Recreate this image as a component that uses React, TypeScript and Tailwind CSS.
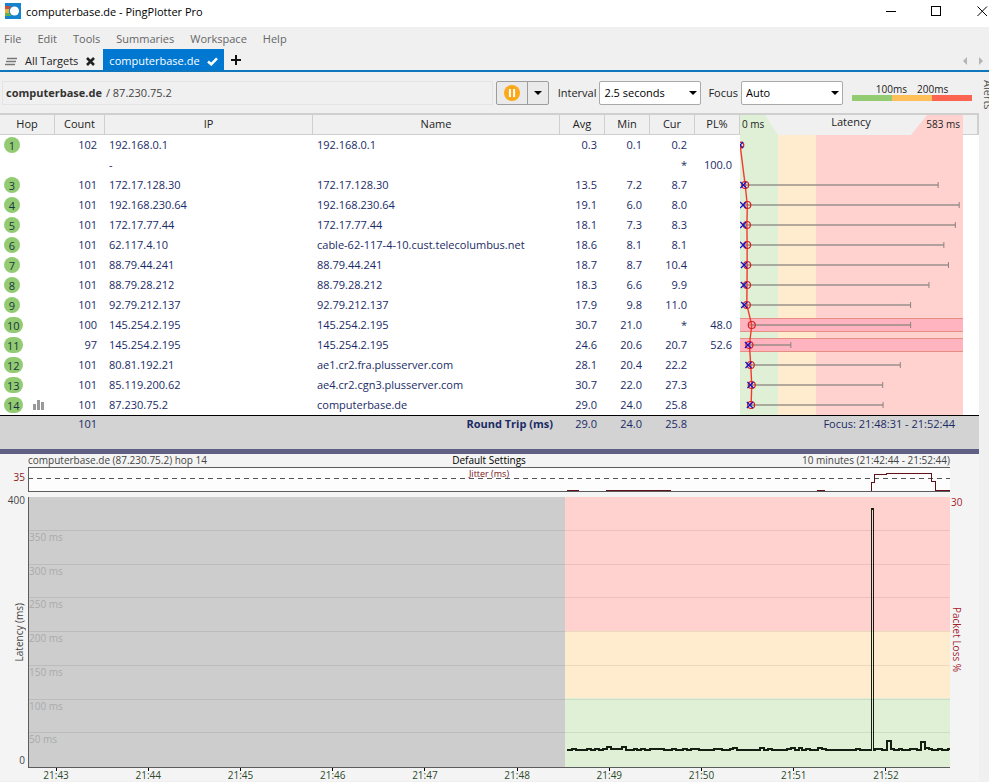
interface Hop {
    hop: number | null;
    count: string;
    ip: string;
    name: string;
    avg?: number;
    min?: number;
    cur?: number;
    max?: number;
    loss?: number;
}

const HOPS: Hop[] = [
    { hop: 1, count: '102', ip: '192.168.0.1', name: '192.168.0.1', avg: 0.3, min: 0.1, cur: 0.2 },
    { hop: null, count: '', ip: '-', name: '', loss: 100 },
    { hop: 3, count: '101', ip: '172.17.128.30', name: '172.17.128.30', avg: 13.5, min: 7.2, cur: 8.7, max: 518 },
    { hop: 4, count: '101', ip: '192.168.230.64', name: '192.168.230.64', avg: 19.1, min: 6.0, cur: 8.0, max: 573 },
    { hop: 5, count: '101', ip: '172.17.77.44', name: '172.17.77.44', avg: 18.1, min: 7.3, cur: 8.3, max: 563 },
    { hop: 6, count: '101', ip: '62.117.4.10', name: 'cable-62-117-4-10.cust.telecolumbus.net', avg: 18.6, min: 8.1, cur: 8.1, max: 533 },
    { hop: 7, count: '101', ip: '88.79.44.241', name: '88.79.44.241', avg: 18.7, min: 8.7, cur: 10.4, max: 545 },
    { hop: 8, count: '101', ip: '88.79.28.212', name: '88.79.28.212', avg: 18.3, min: 6.6, cur: 9.9, max: 494 },
    { hop: 9, count: '101', ip: '92.79.212.137', name: '92.79.212.137', avg: 17.9, min: 9.8, cur: 11.0, max: 446 },
    { hop: 10, count: '100', ip: '145.254.2.195', name: '145.254.2.195', avg: 30.7, min: 21.0, max: 446, loss: 48 },
    { hop: 11, count: '97', ip: '145.254.2.195', name: '145.254.2.195', avg: 24.6, min: 20.6, cur: 20.7, max: 133, loss: 52.6 },
    { hop: 12, count: '101', ip: '80.81.192.21', name: 'ae1.cr2.fra.plusserver.com', avg: 28.1, min: 20.4, cur: 22.2, max: 419 },
    { hop: 13, count: '101', ip: '85.119.200.62', name: 'ae4.cr2.cgn3.plusserver.com', avg: 30.7, min: 22.0, cur: 27.3, max: 373 },
    { hop: 14, count: '101', ip: '87.230.75.2', name: 'computerbase.de', avg: 29.0, min: 24.0, cur: 25.8, max: 374 }
];

const TIMES = ['21:43', '21:44', '21:45', '21:46', '21:47', '21:48', '21:49', '21:50', '21:51', '21:52'];
const GRID_LABELS = ['', '350 ms', '300 ms', '250 ms', '200 ms', '150 ms', '100 ms', '50 ms'];
const MENU = ['File', 'Edit', 'Tools', 'Summaries', 'Workspace', 'Help'];

// [start, end, height above the base line]
const STEPS: [number, number, number][] = [
    [543, 547, 1], [558, 562, 1], [566, 570, 1], [574, 578, 1], [578, 582, 3], [582, 593, 1], [593, 597, 3],
    [605, 608, 1], [612, 616, 1], [621, 635, 1], [643, 647, 1], [654, 658, 1], [662, 670, 1], [685, 693, 1],
    [701, 704, 1], [704, 708, 2], [731, 735, 2], [739, 743, 1], [758, 762, 1], [762, 766, 2], [770, 773, 2],
    [777, 781, 1], [789, 793, 2], [793, 797, 1], [827, 831, 1]
];
const STEPS_AFTER: [number, number, number][] = [
    [846, 853, 1], [858, 862, 9], [862, 865, 1], [870, 873, 1], [881, 888, 1], [892, 896, 8], [896, 900, 2],
    [900, 903, 1], [909, 913, 1], [919, 922, 1]
];

const BASE = 253;
const tracePath = (start: number, end: number, steps: [number, number, number][]) => {
    let d = `M${start} ${BASE}`;
    for (const [a, b, h] of steps) {
        d += `H${a}V${BASE - h}H${b}V${BASE}`;
    }
    return d + `H${end}`;
};

const SCALE = 223 / 583;
const px = (ms: number) => ms * SCALE;
const rowY = (i: number) => 32 + i * 20;
const fmt = (n?: number) => (n === undefined ? '' : n.toFixed(1));

function TitleBar() {
    return (
        <header className="flex h-[27px] items-start justify-between bg-white text-black">
            <div className="flex items-start gap-[5px] pl-[5px] pt-[3px]">
                <svg width="16" height="16" viewBox="0 0 16 16">
                    <rect width="16" height="16" fill="#1583cf" />
                    <rect y="3" width="6" height="3" fill="#c8503c" />
                    <rect y="6" width="6" height="4" fill="#e9b23c" />
                    <rect y="10" width="6" height="3" fill="#69b04b" />
                    <circle cx="9.5" cy="8" r="5.6" fill="#1583cf" />
                    <circle cx="9.5" cy="8" r="4.6" fill="#fff" />
                </svg>
                <h1 className="text-[11px] leading-[18px]">computerbase.de - PingPlotter Pro</h1>
            </div>
            <div className="flex">
                <button aria-label="Minimize" className="flex h-[22px] w-[45px] items-center justify-center">
                    <svg width="11" height="11" stroke="#000" shapeRendering="crispEdges"><path d="M0 5.5H10" /></svg>
                </button>
                <button aria-label="Maximize" className="flex h-[22px] w-[45px] items-center justify-center">
                    <svg width="11" height="11" fill="none" stroke="#000" shapeRendering="crispEdges">
                        <rect x="0.5" y="0.5" width="9" height="9" />
                    </svg>
                </button>
                <button aria-label="Close" className="flex h-[22px] w-[30px] items-center justify-end pr-px">
                    <svg width="11" height="11" stroke="#000"><path d="M0.5 0.5L10 10M10 0.5L0.5 10" /></svg>
                </button>
            </div>
        </header>
    );
}

function Tabs() {
    return (
        <div className="flex h-[23px] items-stretch border-b-2 border-[#0f77bd] text-[#222]">
            <button className="flex items-center gap-2 pl-[5px] pr-2 pt-[3px]">
                <svg width="12" height="9" stroke="#777" strokeWidth="1.4">
                    <path d="M2 1.5H12M1 4.5H11M0 7.5H10" />
                </svg>
                <span className="text-[11px]">All Targets</span>
            </button>
            <button aria-label="Close tab" className="mr-2 pt-[3px]">
                <svg width="9" height="9" stroke="#222" strokeWidth="2.6"><path d="M1 1L8 8M8 1L1 8" /></svg>
            </button>
            <button className="flex items-center gap-[7px] bg-[#0078d2] px-[6px] pt-[3px] text-white">
                <span className="text-[11px]">computerbase.de</span>
                <svg width="11" height="9" fill="none" stroke="#fff" strokeWidth="2.6"><path d="M1 4.5L4.2 7.3L10 1.3" /></svg>
            </button>
            <button aria-label="Add tab" className="px-[7px] pt-px">
                <svg width="11" height="11" stroke="#111" strokeWidth="2" shapeRendering="crispEdges"><path d="M0 5H10M5 0V10" /></svg>
            </button>
            <div className="ml-auto flex items-center gap-3 pr-[6px] pt-0.5">
                <svg width="4" height="8" fill="#b4b4b4"><path d="M4 0V8L0 4Z" /></svg>
                <svg width="4" height="8" fill="#b4b4b4"><path d="M0 0V8L4 4Z" /></svg>
            </div>
        </div>
    );
}

function Picker({ id, label, value }: { id: string; label: string; value: string }) {
    return (
        <div className="flex items-center gap-[3px]">
            <label htmlFor={id}>{label}</label>
            <div className="relative">
                <select
                    id={id}
                    defaultValue={value}
                    className="h-6 w-[102px] appearance-none rounded-[2px] border border-[#a9a9a9] bg-white pl-1 text-[11px] text-black"
                >
                    <option>{value}</option>
                </select>
                <svg className="pointer-events-none absolute right-1 top-[10px]" width="8" height="4"><path d="M0 0H8L4 4Z" /></svg>
            </div>
        </div>
    );
}

function Toolbar() {
    return (
        <div className="flex h-[41px] items-center pl-[2px] pr-[7px] text-[#222]">
            <div className="flex h-6 flex-1 items-center gap-1 border border-[#e4e4e4] pl-[3px] text-[#444]">
                <span className="font-bold text-[#333]">computerbase.de</span>
                <span>/ 87.230.75.2</span>
            </div>
            <div className="ml-[3px] flex h-6 rounded-[2px] border border-[#9d9d9d] bg-[#eaeaea]">
                <button aria-label="Pause" className="flex w-[31px] items-center justify-center border-r border-[#9d9d9d]">
                    <svg width="16" height="16">
                        <circle cx="8" cy="8" r="8" fill="#fba919" />
                        <path d="M5.9 4V12M10.1 4V12" stroke="#fff" strokeWidth="2" />
                    </svg>
                </button>
                <button aria-label="Pause options" className="flex w-5 items-center justify-center">
                    <svg width="8" height="4"><path d="M0 0H8L4 4Z" /></svg>
                </button>
            </div>
            <div className="ml-[9px] flex gap-[7px]">
                <Picker id="interval" label="Interval" value="2.5 seconds" />
                <Picker id="focus" label="Focus" value="Auto" />
            </div>
            <div className="ml-[9px] w-[120px] pb-0.5">
                <div className="flex justify-center gap-[10px] text-[10px] leading-3 text-[#222]">
                    <span>100ms</span>
                    <span>200ms</span>
                </div>
                <div className="flex h-[6px]">
                    <div className="flex-1 bg-[#93cb73]" />
                    <div className="flex-1 bg-[#ffbf58]" />
                    <div className="flex-1 bg-[#fa6450]" />
                </div>
            </div>
        </div>
    );
}

function HopTable() {
    return (
        <table className="min-w-0 flex-1 table-fixed border-separate border-spacing-0 bg-white text-[#1a2b66]">
            <colgroup>
                <col className="w-[55px]" />
                <col className="w-[50px]" />
                <col className="w-[208px]" />
                <col />
                <col className="w-[45px]" />
                <col className="w-[45px]" />
                <col className="w-[45px]" />
                <col className="w-[45px]" />
            </colgroup>
            <thead className="bg-[#f0f0f0] text-[#222]">
                <tr className="h-[22px]">
                    {['Hop', 'Count', 'IP', 'Name', 'Avg', 'Min', 'Cur', 'PL%'].map((h) => (
                        <th key={h} className="border-b border-r border-t-2 border-[#cfcfcf] p-0 pb-0.5 font-normal">{h}</th>
                    ))}
                </tr>
            </thead>
            <tbody>
                {HOPS.map((h, i) => (
                    <tr key={i} className="h-5">
                        <td className="p-0">
                            <div className="flex items-center gap-[10px] pl-1">
                                {h.hop !== null && (
                                    <span className="flex h-4 min-w-4 items-center justify-center rounded-full bg-[#93cb73] px-[3px] leading-none text-[#17343f]">
                                        {h.hop}
                                    </span>
                                )}
                                {h.hop === 14 && (
                                    <svg width="11" height="10" fill="#999" shapeRendering="crispEdges">
                                        <path d="M0 4h3v6h-3zM4 0h3v10h-3zM8 2h3v8h-3z" />
                                    </svg>
                                )}
                            </div>
                        </td>
                        <td className="p-0 pr-2 text-right">{h.count}</td>
                        <td className="p-0 pl-1">{h.ip}</td>
                        <td className="truncate p-0 pl-1">{h.name}</td>
                        <td className="p-0 pr-2 text-right">{fmt(h.avg)}</td>
                        <td className="p-0 pr-2 text-right">{fmt(h.min)}</td>
                        <td className="p-0 pr-2 text-right">{h.cur === undefined ? '*' : fmt(h.cur)}</td>
                        <td className="p-0 pr-2 text-right">{fmt(h.loss)}</td>
                    </tr>
                ))}
            </tbody>
            <tfoot className="bg-[#d3d3d3]">
                <tr className="h-[34px] align-top leading-4">
                    <td className="border-t border-black p-0" />
                    <td className="border-t border-black p-0 pr-2 text-right">101</td>
                    <td className="border-t border-black p-0" />
                    <td className="border-t border-black p-0 pr-[7px] text-right font-bold">Round Trip (ms)</td>
                    <td className="border-t border-black p-0 pr-2 text-right">29.0</td>
                    <td className="border-t border-black p-0 pr-2 text-right">24.0</td>
                    <td className="border-t border-black p-0 pr-2 text-right">25.8</td>
                    <td className="border-t border-black p-0" />
                </tr>
            </tfoot>
        </table>
    );
}

function LatencyPanel() {
    const points = HOPS.map((h, i) => (h.avg === undefined ? null : `${px(h.avg)},${rowY(i)}`)).filter(Boolean).join(' ');
    return (
        <div className="w-[239px] bg-white">
            <svg width="239" height="302" className="block">
                <rect width="239" height="22" fill="#f0f0f0" />
                <path d="M0 1H238V22" fill="none" stroke="#cfcfcf" strokeWidth="2" />
                <path d="M223 21.5H239" stroke="#cfcfcf" />
                <rect y="22" width="38" height="280" fill="#dff0d6" />
                <rect x="38" y="22" width="38" height="280" fill="#ffebce" />
                <rect x="76" y="22" width="147" height="280" fill="#ffd2d0" />
                <path d="M0 2H25L38 22H0Z" fill="#dff0d6" />
                <path d="M187 2H223V22H171Z" fill="#ffd2d0" />
                <text x="2" y="15" fontSize="10" fill="#222">0 ms</text>
                <text x="111" y="13" fontSize="11" fill="#222" textAnchor="middle">Latency</text>
                <text x="220" y="15" fontSize="10" fill="#222" textAnchor="end">583 ms</text>
                {HOPS.map((h, i) => h.loss !== undefined && h.hop !== null && (
                    <g key={i} shapeRendering="crispEdges">
                        <rect y={rowY(i) - 7} width="223" height="14" fill="#ffb4c0" />
                        <path d={`M0 ${rowY(i) - 6.5}H223M0 ${rowY(i) + 6.5}H223`} stroke="#e58f82" />
                    </g>
                ))}
                {HOPS.map((h, i) => h.max !== undefined && (
                    <g key={i} stroke="#8c8581">
                        <path d={`M${px(h.min ?? 0)} ${rowY(i)}H${px(h.max)}`} strokeWidth="2" opacity="0.65" />
                        <path d={`M${px(h.max)} ${rowY(i) - 3}V${rowY(i) + 3}`} />
                    </g>
                ))}
                <polyline points={points} fill="none" stroke="#f5392e" strokeWidth="1.4" />
                {HOPS.map((h, i) => h.avg !== undefined && (
                    <g key={i} fill="none">
                        <circle cx={i === 0 ? 1 : px(h.avg)} cy={rowY(i)} r={i === 0 ? 2.8 : 3.5} stroke="#dc2020" strokeWidth="1.2" />
                        {h.cur !== undefined && (
                            <path
                                d={`M${px(h.cur) - 3} ${rowY(i) - 3}l6 6m0 -6l-6 6`}
                                stroke="#1b14c4"
                                strokeWidth="1.3"
                            />
                        )}
                    </g>
                ))}
            </svg>
            <div className="h-[34px] border-t border-black bg-[#d3d3d3] pr-6 text-right leading-4 text-[#1a2b66]">
                Focus: 21:48:31 - 21:52:44
            </div>
        </div>
    );
}

function Timeline() {
    return (
        <section className="bg-[#f4f4f4] text-[10px] text-[#444]">
            <div className="flex">
                <div className="flex w-7 shrink-0 flex-col pb-0.5 pr-[3px] text-right">
                    <span className="mt-[17px] leading-3 text-[#8b1a1a]">35</span>
                    <span className="mt-[11px] leading-3">400</span>
                    <div className="flex flex-1 items-center justify-end pt-1">
                        <span className="rotate-180 leading-3 [writing-mode:vertical-rl]">Latency (ms)</span>
                    </div>
                    <span className="leading-3">0</span>
                </div>
                <div className="min-w-0 flex-1">
                    <div className="grid h-[13px] grid-cols-3 leading-[13px]">
                        <span className="whitespace-nowrap">computerbase.de (87.230.75.2) hop 14</span>
                        <span className="text-center text-black">Default Settings</span>
                        <span className="whitespace-nowrap text-right">10 minutes (21:42:44 - 21:52:44)</span>
                    </div>
                    <div className="relative h-[25px] bg-[#fdfdfd]">
                        <svg className="block h-full w-full" viewBox="0 0 922 25" preserveAspectRatio="none" fill="none" shapeRendering="crispEdges">
                            <path d="M0 11.5H922" stroke="#555" strokeDasharray="5 4" />
                            <path d="M922 0.5H0.5V24.5H922" stroke="#5c5c5c" />
                            <path
                                d="M539 23.5H551M578 23.5H643M789 23.5H797M843.5 24V15.5H846.5V7.5H858.5V6.5H903.5V14.5H907.5V23.5H922"
                                stroke="#5f1018"
                            />
                        </svg>
                        <span className="absolute inset-x-0 top-px text-center text-[9px] leading-3 text-[#7a1520]">Jitter (ms)</span>
                    </div>
                    <div className="relative mt-[5px] h-[271px] border-b border-l border-[#5c5c5c]">
                        <svg className="block h-full w-full" viewBox="0 0 921 270" preserveAspectRatio="none" shapeRendering="crispEdges">
                            <rect width="921" height="134" fill="#ffd2d0" />
                            <rect y="134" width="921" height="67" fill="#ffebce" />
                            <rect y="201" width="921" height="69" fill="#dff0d6" />
                            <rect width="536" height="270" fill="#cdcdcd" />
                            <g fill="none" stroke="#141f12">
                                <path d={tracePath(538, 843, STEPS)} strokeWidth="2" />
                                <path d="M842.5 254V11.5H844.5V254" />
                                <path d="M842 12H845" strokeWidth="2" />
                                <path d={tracePath(844, 922, STEPS_AFTER)} strokeWidth="2" />
                            </g>
                        </svg>
                        <div className="absolute inset-x-0 top-0 flex h-[269px] flex-col">
                            {GRID_LABELS.map((l) => (
                                <div key={l} className={`flex-1 leading-3 text-[#aaa] ${l ? 'border-t border-black/8' : ''}`}>{l}</div>
                            ))}
                        </div>
                    </div>
                </div>
                <div className="flex w-[29px] shrink-0 flex-col pl-px text-[#a51c2c]">
                    <span className="mt-[42px] leading-3">30</span>
                    <div className="flex flex-1 items-center pt-1">
                        <span className="leading-3 [writing-mode:vertical-rl]">Packet Loss %</span>
                    </div>
                </div>
            </div>
            <div className="flex pl-[10px] pr-[47px] text-[#2c4a2c]">
                {TIMES.map((t) => (
                    <div key={t} className="flex flex-1 flex-col items-center">
                        <span className="h-[3px] w-px bg-black" />
                        <span className="-mt-0.5 leading-3">{t}</span>
                    </div>
                ))}
            </div>
        </section>
    );
}

export default function App() {
    return (
        <div className="min-h-screen overflow-hidden bg-[#f0f0f0] font-['Open_Sans','Noto_Sans',sans-serif] text-[11px] leading-4">
            <TitleBar />
            <nav className="flex h-[22px] items-center gap-4 pl-1 pt-0.5 text-[#666]">
                {MENU.map((m) => (
                    <button key={m}>{m}</button>
                ))}
            </nav>
            <Tabs />
            <div className="flex">
                <main className="min-w-0 flex-1">
                    <Toolbar />
                    <div className="flex">
                        <HopTable />
                        <LatencyPanel />
                    </div>
                    <div className="h-[5px] bg-[#605f84]" />
                    <Timeline />
                </main>
                <aside className="flex w-[10px] shrink-0 items-start overflow-hidden pl-1 pt-2 text-[#555]">
                    <button className="shrink-0 leading-[10px] [writing-mode:vertical-rl]">Alerts</button>
                </aside>
            </div>
        </div>
    );
}
